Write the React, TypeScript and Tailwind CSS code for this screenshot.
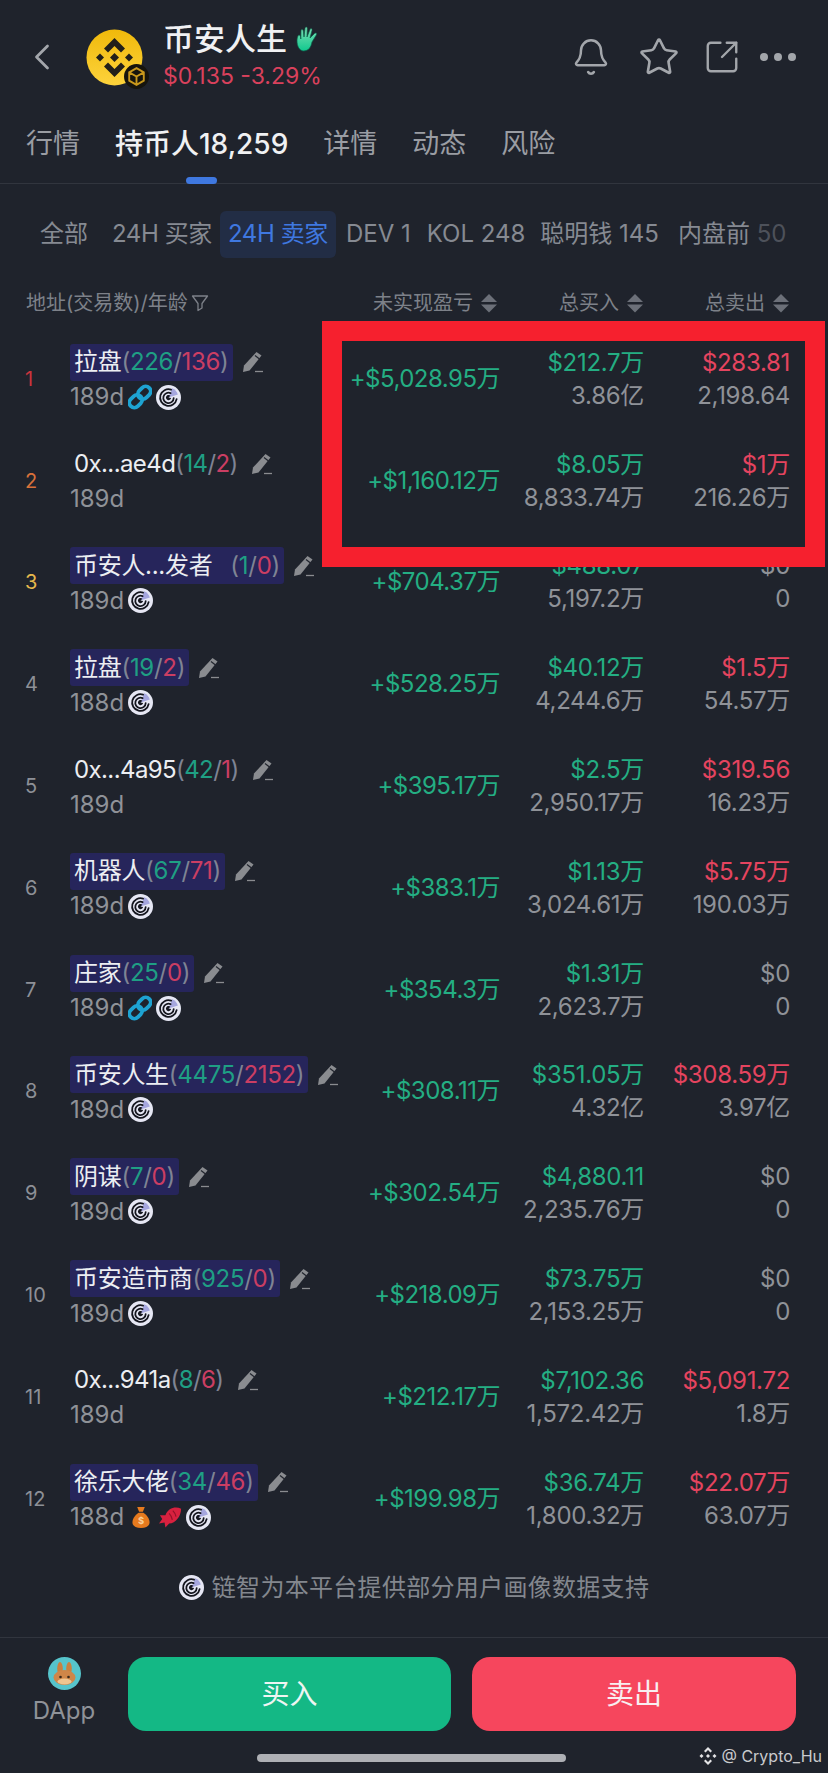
import { Bell, Star, ChevronLeft, SquareArrowOutUpRight } from "lucide-react";

interface Holder {
  rank: number;
  name: string;
  buys: string;
  sells: string;
  spaced?: boolean;
  badge: boolean;
  age: string;
  icons: string[];
  pnl: string;
  buy: string;
  buyQty: string;
  sell: string;
  sellQty: string;
}

const HOLDERS: Holder[] = [
  { rank: 1, name: "拉盘", buys: "226", sells: "136", badge: true, age: "189d", icons: ["chain", "radar"], pnl: "+$5,028.95万", buy: "$212.7万", buyQty: "3.86亿", sell: "$283.81", sellQty: "2,198.64" },
  { rank: 2, name: "0x...ae4d", buys: "14", sells: "2", badge: false, age: "189d", icons: [], pnl: "+$1,160.12万", buy: "$8.05万", buyQty: "8,833.74万", sell: "$1万", sellQty: "216.26万" },
  { rank: 3, name: "币安人...发者", buys: "1", sells: "0", spaced: true, badge: true, age: "189d", icons: ["radar"], pnl: "+$704.37万", buy: "$488.07", buyQty: "5,197.2万", sell: "$0", sellQty: "0" },
  { rank: 4, name: "拉盘", buys: "19", sells: "2", badge: true, age: "188d", icons: ["radar"], pnl: "+$528.25万", buy: "$40.12万", buyQty: "4,244.6万", sell: "$1.5万", sellQty: "54.57万" },
  { rank: 5, name: "0x...4a95", buys: "42", sells: "1", badge: false, age: "189d", icons: [], pnl: "+$395.17万", buy: "$2.5万", buyQty: "2,950.17万", sell: "$319.56", sellQty: "16.23万" },
  { rank: 6, name: "机器人", buys: "67", sells: "71", badge: true, age: "189d", icons: ["radar"], pnl: "+$383.1万", buy: "$1.13万", buyQty: "3,024.61万", sell: "$5.75万", sellQty: "190.03万" },
  { rank: 7, name: "庄家", buys: "25", sells: "0", badge: true, age: "189d", icons: ["chain", "radar"], pnl: "+$354.3万", buy: "$1.31万", buyQty: "2,623.7万", sell: "$0", sellQty: "0" },
  { rank: 8, name: "币安人生", buys: "4475", sells: "2152", badge: true, age: "189d", icons: ["radar"], pnl: "+$308.11万", buy: "$351.05万", buyQty: "4.32亿", sell: "$308.59万", sellQty: "3.97亿" },
  { rank: 9, name: "阴谋", buys: "7", sells: "0", badge: true, age: "189d", icons: ["radar"], pnl: "+$302.54万", buy: "$4,880.11", buyQty: "2,235.76万", sell: "$0", sellQty: "0" },
  { rank: 10, name: "币安造市商", buys: "925", sells: "0", badge: true, age: "189d", icons: ["radar"], pnl: "+$218.09万", buy: "$73.75万", buyQty: "2,153.25万", sell: "$0", sellQty: "0" },
  { rank: 11, name: "0x...941a", buys: "8", sells: "6", badge: false, age: "189d", icons: [], pnl: "+$212.17万", buy: "$7,102.36", buyQty: "1,572.42万", sell: "$5,091.72", sellQty: "1.8万" },
  { rank: 12, name: "徐乐大佬", buys: "34", sells: "46", badge: true, age: "188d", icons: ["bag", "fish", "radar"], pnl: "+$199.98万", buy: "$36.74万", buyQty: "1,800.32万", sell: "$22.07万", sellQty: "63.07万" },
];

const RANK_COLOR: Record<number, string> = {
  1: "text-[#c9343d]",
  2: "text-[#d8713a]",
  3: "text-[#e6b84c]",
};

function Radar() {
  return (
    <svg width="25" height="25" viewBox="0 0 24 24" className="shrink-0">
      <circle cx="12" cy="12" r="12" fill="#e6e7f4" />
      <path d="M12 12 L15.500 3 A9.500 9.500 0 0 1 21 9 Z" fill="#a5a6de" />
      <g fill="none" stroke="#14151e" strokeWidth="1.700" strokeLinecap="round">
        <path d="M14.500 4.500 A8 8 0 1 0 19.800 13.500" />
        <path d="M14 7.800 A5 5 0 1 0 17 12.500" />
      </g>
      <path d="M13.800 10.300 A2.500 2.500 0 1 0 14.500 12.500 L12 12 Z" fill="#14151e" />
    </svg>
  );
}

function Chain() {
  return (
    <svg width="24" height="26" viewBox="0 0 24 26" className="shrink-0">
      <g fill="none" stroke="#1ea3d2" strokeWidth="3.800" transform="rotate(-45 12 13)">
        <rect x="-1" y="8" width="14" height="10" rx="5" />
        <rect x="11" y="8" width="14" height="10" rx="5" />
      </g>
    </svg>
  );
}

function Bag() {
  return (
    <svg width="18" height="23" viewBox="0 0 19 23" className="ml-[4px] shrink-0">
      <path d="M5.500 .5 L13.500 .5 L11.500 5.500 L7.500 5.500 Z" fill="#e67a1e" />
      <path d="M7 6.500 H12 C16 9 18.500 13 18.500 16.500 C18.500 20.500 15 22.500 9.500 22.500 C4 22.500 .5 20.500 .5 16.500 C.5 13 3 9 7 6.500 Z" fill="#e67a1e" />
      <text x="9.500" y="18.500" textAnchor="middle" fontSize="10" fontWeight="700" fill="#f9cf9a">$</text>
    </svg>
  );
}

function Fish() {
  return (
    <svg width="23" height="23" viewBox="0 0 25 23" className="ml-[5px] shrink-0">
      <path d="M24 2 C18 -1 10 1 7 9 L1 9 L3.500 13 L0 18 L6 17 L7 22.500 L11 18 C18 18 24 10 24 2 Z" fill="#d8213f" />
      <path d="M11 7 C13 9 14 11 14.500 14 M15 4 C17 6 18 8 18.500 10.500" fill="none" stroke="#951229" strokeWidth="1.300" />
    </svg>
  );
}

function Pencil() {
  return (
    <svg width="22" height="22" viewBox="0 0 22 22" className="shrink-0">
      <path d="M14.500 1 L19.500 4.500 L7.500 19.500 L1 21 L2 14.500 Z" fill="#8a8c90" />
      <path d="M13 4.500 L17.500 8" stroke="#20242d" strokeWidth="1.200" />
      <path d="M13 20.500 H21" stroke="#8a8c90" strokeWidth="1.300" />
    </svg>
  );
}

function SortIcon() {
  return (
    <svg width="18" height="20" viewBox="0 0 18 20" className="shrink-0">
      <path d="M9 1 L17 9 H1 Z" fill="#6c7079" />
      <path d="M1 11.500 H17 L9 19.500 Z" fill="#6c7079" />
    </svg>
  );
}

function HandIcon() {
  return (
    <svg width="22" height="26" viewBox="0 0 22 26" className="shrink-0">
      <defs>
        <linearGradient id="hand" x1="0" y1="0" x2="0" y2="1">
          <stop offset="0" stopColor="#7fe0b4" />
          <stop offset="1" stopColor="#10c88e" />
        </linearGradient>
      </defs>
      <path
        d="M7 25 C3 24 1 20 1 15 C1 12 2 9 3 9 C4.500 9 4.500 11 4.800 13 L5 5 C5 3 7 3 7.300 5 L8 11 L9 2.500 C9.300 .5 11.300 .5 11.300 2.500 L11 11 L14 3.500 C14.700 1.800 16.500 2.500 16 4.500 L14 12 L18.500 7.500 C20 6.200 21.500 7.500 20.300 9 L16 16 C15 21 13 25 7 25 Z"
        fill="url(#hand)"
        stroke="#0c5c48"
        strokeWidth=".7"
      />
    </svg>
  );
}

function Tag({ kind }: { kind: string }) {
  if (kind === "chain") return <Chain />;
  if (kind === "bag") return <Bag />;
  if (kind === "fish") return <Fish />;
  return <Radar />;
}

function TokenLogo() {
  return (
    <div className="relative h-[57px] w-[57px] shrink-0">
      <svg width="57" height="57" viewBox="0 0 57 57">
        <defs>
          <linearGradient id="coin" x1="0" y1="0" x2="0" y2="1">
            <stop offset="0" stopColor="#f0b90b" />
            <stop offset="1" stopColor="#fdd33c" />
          </linearGradient>
        </defs>
        <circle cx="28.500" cy="28.500" r="28" fill="url(#coin)" />
        <g fill="#22201a">
          <path d="M28.500 9 L39 19.500 L35 23.500 L28.500 17 L22 23.500 L18 19.500 Z" />
          <path d="M28.500 48 L39 37.500 L35 33.500 L28.500 40 L22 33.500 L18 37.500 Z" />
          <path d="M28.500 24 L33 28.500 L28.500 33 L24 28.500 Z" />
          <path d="M14 24.500 L18 28.500 L14 32.500 L10 28.500 Z" />
          <path d="M43 24.500 L47 28.500 L43 32.500 L39 28.500 Z" />
        </g>
      </svg>
      <svg width="25" height="25" viewBox="0 0 24 24" className="absolute -bottom-[3px] -right-[6px]">
        <circle cx="12" cy="12" r="12" fill="#16140d" />
        <path d="M12 4 L19 8 V16 L12 20 L5 16 V8 Z M5 8 L12 12 L19 8 M12 12 V20" fill="none" stroke="#c9981c" strokeWidth="1.800" />
      </svg>
    </div>
  );
}

function Row({ h }: { h: Holder }) {
  return (
    <div className="flex h-[101.8px] items-center pr-[38px]">
      <div className={`w-[70px] shrink-0 pl-[25px] text-[20px] ${RANK_COLOR[h.rank] ?? "text-[#8d9097]"}`}>{h.rank}</div>
      <div className="flex min-w-0 flex-1 flex-col">
        <div className="flex h-[37px] items-center gap-[9px]">
          <div className={`flex h-[37px] shrink-0 items-center whitespace-nowrap rounded-[3px] px-[4px] text-[24px] text-[#eceef2] ${h.badge ? "bg-[#26255b] tracking-[-0.3px]" : "tracking-[-0.6px]"}`}>
            <span>{h.name}</span>
            {h.spaced && <span className="w-[18px]" />}
            <span className="text-[#7f8494]">(</span>
            <span className="text-[#1f9f84]">{h.buys}</span>
            <span className="text-[#7f8494]">/</span>
            <span className="text-[#cb3e63]">{h.sells}</span>
            <span className="text-[#7f8494]">)</span>
          </div>
          <Pencil />
        </div>
        <div className="flex h-[33px] items-center gap-[4px] text-[24px] text-[#8f9298]">
          <span>{h.age}</span>
          {h.icons.map((k, i) => (
            <Tag key={i} kind={k} />
          ))}
        </div>
      </div>
      <div className="w-[160px] shrink-0 text-right text-[24px] tracking-[-0.5px] text-[#24ae83]">{h.pnl}</div>
      <div className="w-[144px] shrink-0 text-right text-[24px] leading-[33px] tracking-[-0.3px]">
        <div className="text-[#24ae83]">{h.buy}</div>
        <div className="text-[#8f9298]">{h.buyQty}</div>
      </div>
      <div className="w-[146px] shrink-0 text-right text-[24px] leading-[33px] tracking-[-0.3px]">
        <div className={h.sell === "$0" ? "text-[#8f9298]" : "text-[#e5445f]"}>{h.sell}</div>
        <div className="text-[#8f9298]">{h.sellQty}</div>
      </div>
    </div>
  );
}

export default function App() {
  return (
    <div className="relative flex h-[1773px] w-[828px] flex-col overflow-hidden bg-[#1f232c] font-['Inter','Noto_Sans_CJK_SC',sans-serif] text-[#8f9298]">
      {/* header */}
      <div className="flex h-[114px] shrink-0 items-center pl-[20px] pr-[32px]">
        <ChevronLeft size={44} strokeWidth={1.5} className="text-[#a3a6ab]" />
        <div className="ml-[22px]">
          <TokenLogo />
        </div>
        <div className="ml-[20px] flex flex-col">
          <div className="flex h-[36px] -translate-y-[2px] items-center gap-[9px] text-[31px] font-medium text-[#f0f1f3]">
            币安人生
            <HandIcon />
          </div>
          <div className="translate-y-[1px] text-[23px] leading-[32px] text-[#d9415c]">$0.135 -3.29%</div>
        </div>
        <div className="ml-auto flex items-center">
          <Bell size={40} strokeWidth={1.5} className="text-[#a3a6ab]" />
          <Star size={42} strokeWidth={1.5} className="ml-[27px] text-[#a3a6ab]" />
          <SquareArrowOutUpRight size={38} strokeWidth={1.5} className="ml-[23px] text-[#a3a6ab]" />
          <div className="ml-[19px] flex gap-[6px]">
            <span className="h-[8px] w-[8px] rounded-full bg-[#a3a6ab]" />
            <span className="h-[8px] w-[8px] rounded-full bg-[#a3a6ab]" />
            <span className="h-[8px] w-[8px] rounded-full bg-[#a3a6ab]" />
          </div>
        </div>
      </div>

      {/* main tabs */}
      <div className="relative flex h-[70px] shrink-0 gap-[35px] border-b border-[#31353e] pl-[26px] pt-[9px] text-[27px] leading-[42px] text-[#9a9da3]">
        <span>行情</span>
        <span className="text-[28px] font-medium text-[#f0f1f3]">持币人18,259</span>
        <span>详情</span>
        <span>动态</span>
        <span>风险</span>
        <span className="absolute bottom-[-1px] left-[186px] h-[7px] w-[31px] rounded-full bg-[#3f78e0]" />
      </div>

      {/* sub tabs */}
      <div className="flex h-[100px] shrink-0 items-center whitespace-nowrap pl-[40px] text-[24px] text-[#868a92]">
        <span>全部</span>
        <span className="ml-[24px] tracking-[-0.4px]">24H 买家</span>
        <span className="ml-[8px] flex h-[47px] items-center rounded-[6px] bg-[#222d45] px-[8px] tracking-[-0.4px] text-[#3f78e0]">24H 卖家</span>
        <span className="ml-[10px]">DEV 1</span>
        <span className="ml-[16px]">KOL 248</span>
        <span className="ml-[15px]">聪明钱 145</span>
        <span className="ml-[19px]">内盘前 <span className="text-[#4d515a]">50</span></span>
      </div>

      {/* column header */}
      <div className="flex h-[38px] shrink-0 items-center pl-[26px] pr-[38px] text-[20px] text-[#7d8189]">
        <span>地址(交易数)/年龄</span>
        <svg width="18" height="18" viewBox="0 0 18 18" className="ml-[3px]">
          <path d="M1.500 2 H16.500 L11 9.500 V14 L7 16.500 V9.500 Z" fill="none" stroke="#7d8189" strokeWidth="1.300" strokeLinejoin="round" />
        </svg>
        <span className="ml-auto flex items-center gap-[7px]">未实现盈亏<SortIcon /></span>
        <span className="ml-[61px] flex items-center gap-[7px]">总买入<SortIcon /></span>
        <span className="ml-[61px] flex items-center gap-[7px]">总卖出<SortIcon /></span>
      </div>

      {/* holders */}
      <div className="flex shrink-0 flex-col pt-[6px]">
        {HOLDERS.map((h) => (
          <Row key={h.rank} h={h} />
        ))}
      </div>

      {/* data source note */}
      <div className="flex flex-1 items-start justify-center gap-[8px] pt-[25px] text-[24px] tracking-[0.3px] text-[#83878e]">
        <Radar />
        <span className="leading-[25px]">链智为本平台提供部分用户画像数据支持</span>
      </div>

      {/* bottom bar */}
      <div className="flex h-[136px] shrink-0 border-t border-[#31353e] pl-[32px] pr-[32px] pt-[19px]">
        <div className="flex w-[64px] shrink-0 flex-col items-center">
          <svg width="33" height="33" viewBox="0 0 33 33">
            <circle cx="16.500" cy="16.500" r="16.500" fill="#56c4cb" />
            <ellipse cx="12" cy="11.500" rx="2.800" ry="6.500" fill="#c9803f" />
            <ellipse cx="21" cy="11.500" rx="2.800" ry="6.500" fill="#c9803f" />
            <ellipse cx="16.500" cy="20.500" rx="11" ry="7.500" fill="#cf8648" />
            <ellipse cx="16.500" cy="24.500" rx="7" ry="3" fill="#f0c590" />
            <circle cx="12.500" cy="20" r="1.300" fill="#3a2a1c" />
            <circle cx="20.500" cy="20" r="1.300" fill="#3a2a1c" />
          </svg>
          <span className="mt-[5px] text-[24px] leading-[32px] text-[#8f9298]">DApp</span>
        </div>
        <button className="ml-[32px] flex h-[74px] w-[323px] items-center justify-center rounded-[18px] bg-[#14b885] text-[28px] text-[#eef5f2]">买入</button>
        <button className="ml-[21px] flex h-[74px] w-[324px] items-center justify-center rounded-[18px] bg-[#f6465d] text-[28px] text-[#f8eef0]">卖出</button>
      </div>

      {/* home indicator */}
      <div className="absolute left-[257px] top-[1754px] h-[8px] w-[309px] rounded-full bg-[#aeb0b5]" />

      {/* watermark */}
      <div className="absolute right-[6px] top-[1744px] flex items-center gap-[4px] text-[16px] leading-[24px] text-[#c9cacd]">
        <svg width="18" height="18" viewBox="0 0 18 18">
          <g fill="#e4e4e6">
            <path d="M9 0 L13 4 L11.500 5.500 L9 3 L6.500 5.500 L5 4 Z" />
            <path d="M9 18 L13 14 L11.500 12.500 L9 15 L6.500 12.500 L5 14 Z" />
            <path d="M9 7 L11 9 L9 11 L7 9 Z" />
            <path d="M2.500 7 L4.500 9 L2.500 11 L.5 9 Z" />
            <path d="M15.500 7 L17.500 9 L15.500 11 L13.500 9 Z" />
          </g>
        </svg>
        <span>@ Crypto_Hu</span>
      </div>

      {/* red annotation box */}
      <div className="absolute left-[322px] top-[321px] h-[246px] w-[503px] border-[20px] border-[#f6202e]" />
    </div>
  );
}
